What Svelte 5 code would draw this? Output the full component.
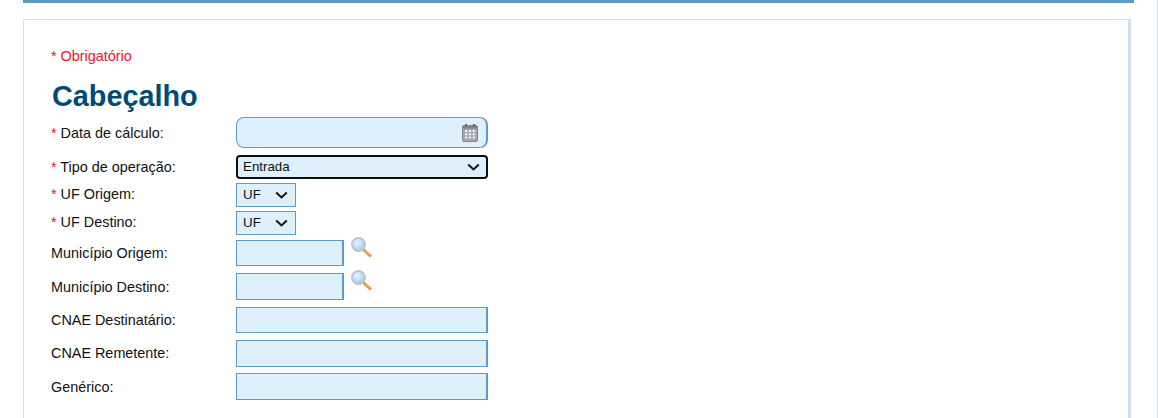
<script lang="ts">
  // gap: extra space above the row, beyond the base row gap
  const fields = [
    { id: 'uf-origem', label: 'UF Origem:', required: true, kind: 'uf', gap: 'g0', up: true },
    { id: 'uf-destino', label: 'UF Destino:', required: true, kind: 'uf', gap: 'g0', up: true },
    { id: 'mun-origem', label: 'Município Origem:', kind: 'search', gap: 'g1' },
    { id: 'mun-destino', label: 'Município Destino:', kind: 'search', gap: 'g3', tall: true },
    { id: 'cnae-dest', label: 'CNAE Destinatário:', kind: 'text', gap: 'g3' },
    { id: 'cnae-rem', label: 'CNAE Remetente:', kind: 'text', gap: 'g3', tall: true, up: true },
    { id: 'generico', label: 'Genérico:', kind: 'text', gap: 'g2', tall: true }
  ];
</script>

{#snippet lens()}
  <svg class="lens" width="22" height="22" viewBox="0 0 22 22" aria-hidden="true">
    <defs>
      <radialGradient id="glass" cx="0.4" cy="0.35" r="0.7">
        <stop offset="0" stop-color="#e6f4ff" />
        <stop offset="0.6" stop-color="#b4dafc" />
        <stop offset="1" stop-color="#9ccaf5" />
      </radialGradient>
    </defs>
    <path d="M13 13l2 2" stroke="#a8a29a" stroke-width="2.5" />
    <path d="M15 15l5 4.6" stroke="#f0923a" stroke-width="3" stroke-linecap="round" />
    <path d="M16 14.6l4 3.8" stroke="#fbd27e" stroke-width="1" />
    <circle cx="8.5" cy="8.5" r="6.6" fill="url(#glass)" stroke="#c0c3c6" stroke-width="1.7" />
  </svg>
{/snippet}

<div class="page">
  <div class="topline"></div>
  <div class="card">
    <p class="note"><span class="req">*</span> Obrigatório</p>
    <h1>Cabeçalho</h1>
    <div class="form">
      <label for="data"><span class="req">*</span> Data de cálculo:</label>
      <div class="control date-wrap">
        <input id="data" class="date" type="text" />
        <svg class="cal" width="16" height="18" viewBox="0 0 16 18" aria-hidden="true">
          <rect x="0.5" y="1.5" width="15" height="16" rx="1.5" fill="#a3a7aa" stroke="#84888c" />
          <rect x="3" y="0" width="2" height="3" fill="#62676b" />
          <rect x="11" y="0" width="2" height="3" fill="#62676b" />
          <rect x="1" y="2" width="14" height="2.5" fill="#7d8286" />
          <path
            d="M3 6h2.4v2H3zM6.8 6h2.4v2H6.8zM10.6 6H13v2h-2.4zM3 9.3h2.4v2H3zM6.8 9.3h2.4v2H6.8zM10.6 9.3H13v2h-2.4zM3 12.6h2.4v2H3zM6.8 12.6h2.4v2H6.8zM10.6 12.6H13v2h-2.4z"
            fill="#eef0f1"
          />
        </svg>
      </div>

      <label class="g3" for="tipo"><span class="req">*</span> Tipo de operação:</label>
      <div class="control g3">
        <select id="tipo" class="op">
          <option>Entrada</option>
          <option>Saída</option>
        </select>
      </div>

      {#each fields as f}
        <label class={f.gap} class:up={f.up} for={f.id}>
          {#if f.required}<span class="req">*</span>{' '}{/if}{f.label}
        </label>
        <div class="control {f.gap}">
          {#if f.kind === 'uf'}
            <select id={f.id} class="uf"><option>UF</option></select>
          {:else if f.kind === 'search'}
            <input id={f.id} class="short" class:tall={f.tall} type="text" />
            {@render lens()}
          {:else}
            <input id={f.id} class="wide" class:tall={f.tall} type="text" />
          {/if}
        </div>
      {/each}
    </div>
  </div>
</div>

<style>
  :global(body) {
    overflow: hidden;
  }

  .page {
    box-sizing: border-box;
    height: 418px;
    overflow: hidden;
    border-right: 1px solid #d3dade;
    padding: 0 23px;
    background: #fff;
    font-family: "Liberation Sans", Arial, sans-serif;
    color: #111;
  }

  .topline {
    height: 3px;
    background: #5b9ccb;
  }

  .card {
    margin-top: 16px;
    margin-right: 3px;
    height: 500px;
    border: 1px solid #d5e1ec;
    border-right: 3px solid #cfdfec;
    padding: 28px 27px;
  }

  .note {
    margin: 0;
    font-size: 14.4px;
    line-height: 16px;
    color: #f8102c;
  }

  .req {
    color: #f8102c;
  }

  h1 {
    margin: 16px 0 5px 1px;
    font-size: 28.8px;
    line-height: 32px;
    font-weight: 700;
    color: #004a78;
  }

  .form {
    display: grid;
    grid-template-columns: 185px 252px;
    row-gap: 0;
    align-items: center;
  }

  label {
    font-size: 14.4px;
    line-height: 16px;
  }

  label.up {
    margin-bottom: 2px;
  }

  .control {
    display: flex;
    align-items: flex-start;
    gap: 6px;
  }

  .g0 {
    margin-top: 4px;
  }

  .g1 {
    margin-top: 5px;
  }

  .g2 {
    margin-top: 6px;
  }

  .g3 {
    margin-top: 7px;
  }

  input,
  select {
    box-sizing: border-box;
    margin: 0;
    border: 1px solid #5b9ccb;
    border-radius: 0;
    background-color: #def0fc;
    font-family: "Liberation Sans", Arial, sans-serif;
    color: #111;
    outline: none;
  }

  input {
    border-right-width: 2px;
  }

  select {
    appearance: none;
    background-image: url("data:image/svg+xml,%3Csvg xmlns='http://www.w3.org/2000/svg' width='13' height='8' viewBox='0 0 13 8'%3E%3Cpath d='M1.2 1.4l5.3 5 5.3-5' fill='none' stroke='%23111' stroke-width='2'/%3E%3C/svg%3E");
    background-repeat: no-repeat;
    background-size: 13px 8px;
  }

  .date-wrap {
    position: relative;
  }

  .date {
    width: 252px;
    height: 31px;
    border-radius: 8px;
  }

  .cal {
    position: absolute;
    right: 10px;
    top: 7px;
  }

  .op {
    width: 252px;
    height: 24px;
    padding: 0 5px 2px;
    border: 2px solid #101010;
    border-radius: 4px;
    background-position: right 6px center;
    font-size: 13.33px;
  }

  .uf {
    width: 60px;
    height: 24px;
    padding: 0 6px 2px;
    background-position: right 7px center;
    font-size: 13.33px;
  }

  .short {
    width: 108px;
    height: 26px;
  }

  .wide {
    width: 252px;
    height: 26px;
  }

  .tall {
    height: 27px;
  }

  .lens {
    margin-top: -4px;
  }
</style>
